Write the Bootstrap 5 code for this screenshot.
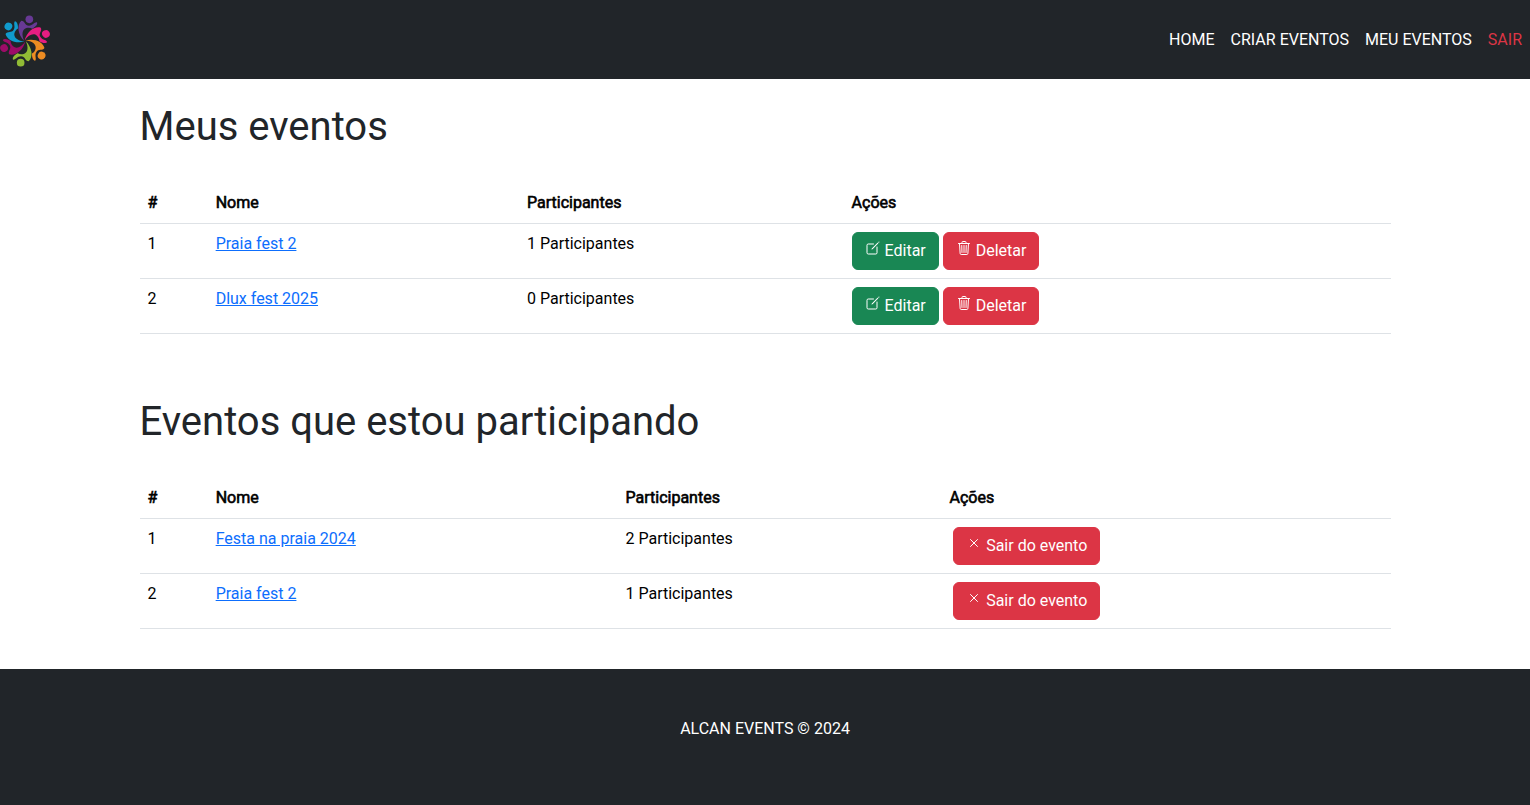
<!DOCTYPE html>
<html lang="pt-br">
<head>
<meta charset="utf-8">
<title>Alcan Events</title>
<link href="https://cdn.jsdelivr.net/npm/bootstrap@5.3.0/dist/css/bootstrap.min.css" rel="stylesheet">
<style>
body { font-family: Roboto, sans-serif; }
.site-nav { height: 79px; }
.logo { width: 50px; height: 50px; overflow: visible; margin-top: 3px; }
.page-title { font-size: 40px; font-weight: 400; line-height: 48px; margin: 0 0 32px; }
.events { margin-bottom: 64px; table-layout: fixed; --bs-table-color: #000; color: #000; }
.events > :not(caption) > * > * { color: #000; }
.events th { font-weight: 400; -webkit-text-stroke: .6px #000; }
.events a { color: #0d6efd; }
.events .leave { margin-left: 3.7px; }
.ion { width: 16px; height: 16px; fill: none; stroke: currentColor; stroke-width: 32; stroke-linecap: round; stroke-linejoin: round; vertical-align: -.125em; position: relative; top: -2px; }
.site-footer { height: 136px; padding-top: 48px; margin-top: 40px; }
</style>
</head>
<body>
<svg class="d-none">
<defs>
<symbol id="edit" viewBox="0 0 512 512"><path d="M384 224v184a40 40 0 0 1-40 40H104a40 40 0 0 1-40-40V168a40 40 0 0 1 40-40h167.48"/><path fill="currentColor" stroke="none" d="M459.94 53.25a16.06 16.06 0 0 0-23.22-.56L424.35 65a8 8 0 0 0 0 11.31l11.34 11.32a8 8 0 0 0 11.34 0l12.06-12c6.1-6.09 6.67-16.01.85-22.38zM399.34 90 218.82 270.2a9 9 0 0 0-2.31 3.93L208.16 299a3.91 3.91 0 0 0 4.86 4.86l24.85-8.35a9 9 0 0 0 3.93-2.31L422 112.66a9 9 0 0 0 0-12.66l-9.95-10a9 9 0 0 0-12.71 0z"/></symbol>
<symbol id="trash" viewBox="0 0 512 512"><path d="m112 112 20 320c.95 18.49 14.4 32 32 32h184c17.67 0 30.87-13.51 32-32l20-320M80 112h352M192 112V72a23.93 23.93 0 0 1 24-24h80a23.93 23.93 0 0 1 24 24v40M256 176v224M184 176l8 224M328 176l-8 224"/></symbol>
<symbol id="close" viewBox="0 0 512 512"><path d="M368 368 144 144M368 144 144 368"/></symbol>
<g id="person"><circle cx="88" cy="10" r="11.5"/><path d="M64 14C50 27 53 55 73 75C64 57 66 40 79 36C86 34 92 35 97 38C105 34 114 26 111 19C102 18 99 29 87 29C74 29 75 14 64 14Z"/></g>
</defs>
</svg>
<nav class="navbar navbar-expand site-nav bg-dark p-0" data-bs-theme="dark">
<div class="container-fluid p-0">
<a class="navbar-brand p-0 m-0" href="#" aria-label="Início"><svg class="logo d-block" viewBox="0 0 150 150">
<use href="#person" fill="#673994"/><use href="#person" fill="#e71d82" transform="rotate(60 75 75)"/><use href="#person" fill="#ed8c22" transform="rotate(120 75 75)"/><use href="#person" fill="#91bb35" transform="rotate(180 75 75)"/><use href="#person" fill="#9d0c68" transform="rotate(240 75 75)"/><use href="#person" fill="#109bcd" transform="rotate(300 75 75)"/></svg></a>
<ul class="navbar-nav">
<li class="nav-item"><a class="nav-link text-white" href="#">HOME</a></li>
<li class="nav-item"><a class="nav-link text-white" href="#">CRIAR EVENTOS</a></li>
<li class="nav-item"><a class="nav-link text-white" href="#">MEU EVENTOS</a></li>
<li class="nav-item"><a class="nav-link text-danger" href="#">SAIR</a></li>
</ul>
</div>
</nav>
<main class="container-fluid p-0 overflow-hidden">
<div class="row g-0"><div class="col-10 offset-1 px-2 pt-4"><div class="px-1">
<h1 class="page-title">Meus eventos</h1>
<table class="table events">
<colgroup><col style="width:68.15px"><col style="width:311.35px"><col style="width:324.6px"><col></colgroup>
<thead><tr><th>#</th><th>Nome</th><th>Participantes</th><th>Ações</th></tr></thead>
<tbody>
<tr><td>1</td><td><a href="#">Praia fest 2</a></td><td>1 Participantes</td><td><a class="btn btn-success text-white" href="#"><svg class="ion"><use href="#edit"/></svg> Editar</a> <button class="btn btn-danger"><svg class="ion"><use href="#trash"/></svg> Deletar</button></td></tr>
<tr><td>2</td><td><a href="#">Dlux fest 2025</a></td><td>0 Participantes</td><td><a class="btn btn-success text-white" href="#"><svg class="ion"><use href="#edit"/></svg> Editar</a> <button class="btn btn-danger"><svg class="ion"><use href="#trash"/></svg> Deletar</button></td></tr>
</tbody></table>
<h1 class="page-title">Eventos que estou participando</h1>
<table class="table events mb-0">
<colgroup><col style="width:68.15px"><col style="width:409.85px"><col style="width:324px"><col></colgroup>
<thead><tr><th>#</th><th>Nome</th><th>Participantes</th><th>Ações</th></tr></thead>
<tbody>
<tr><td>1</td><td><a href="#">Festa na praia 2024</a></td><td>2 Participantes</td><td><button class="btn btn-danger leave"><svg class="ion"><use href="#close"/></svg> Sair do evento</button></td></tr>
<tr><td>2</td><td><a href="#">Praia fest 2</a></td><td>1 Participantes</td><td><button class="btn btn-danger leave"><svg class="ion"><use href="#close"/></svg> Sair do evento</button></td></tr>
</tbody></table>
</div></div></div>
</main>
<footer class="site-footer bg-dark text-white text-center"><p class="m-0">ALCAN EVENTS © 2024</p></footer>
<script src="https://cdn.jsdelivr.net/npm/bootstrap@5.3.0/dist/js/bootstrap.bundle.min.js"></script>
</body>
</html>
